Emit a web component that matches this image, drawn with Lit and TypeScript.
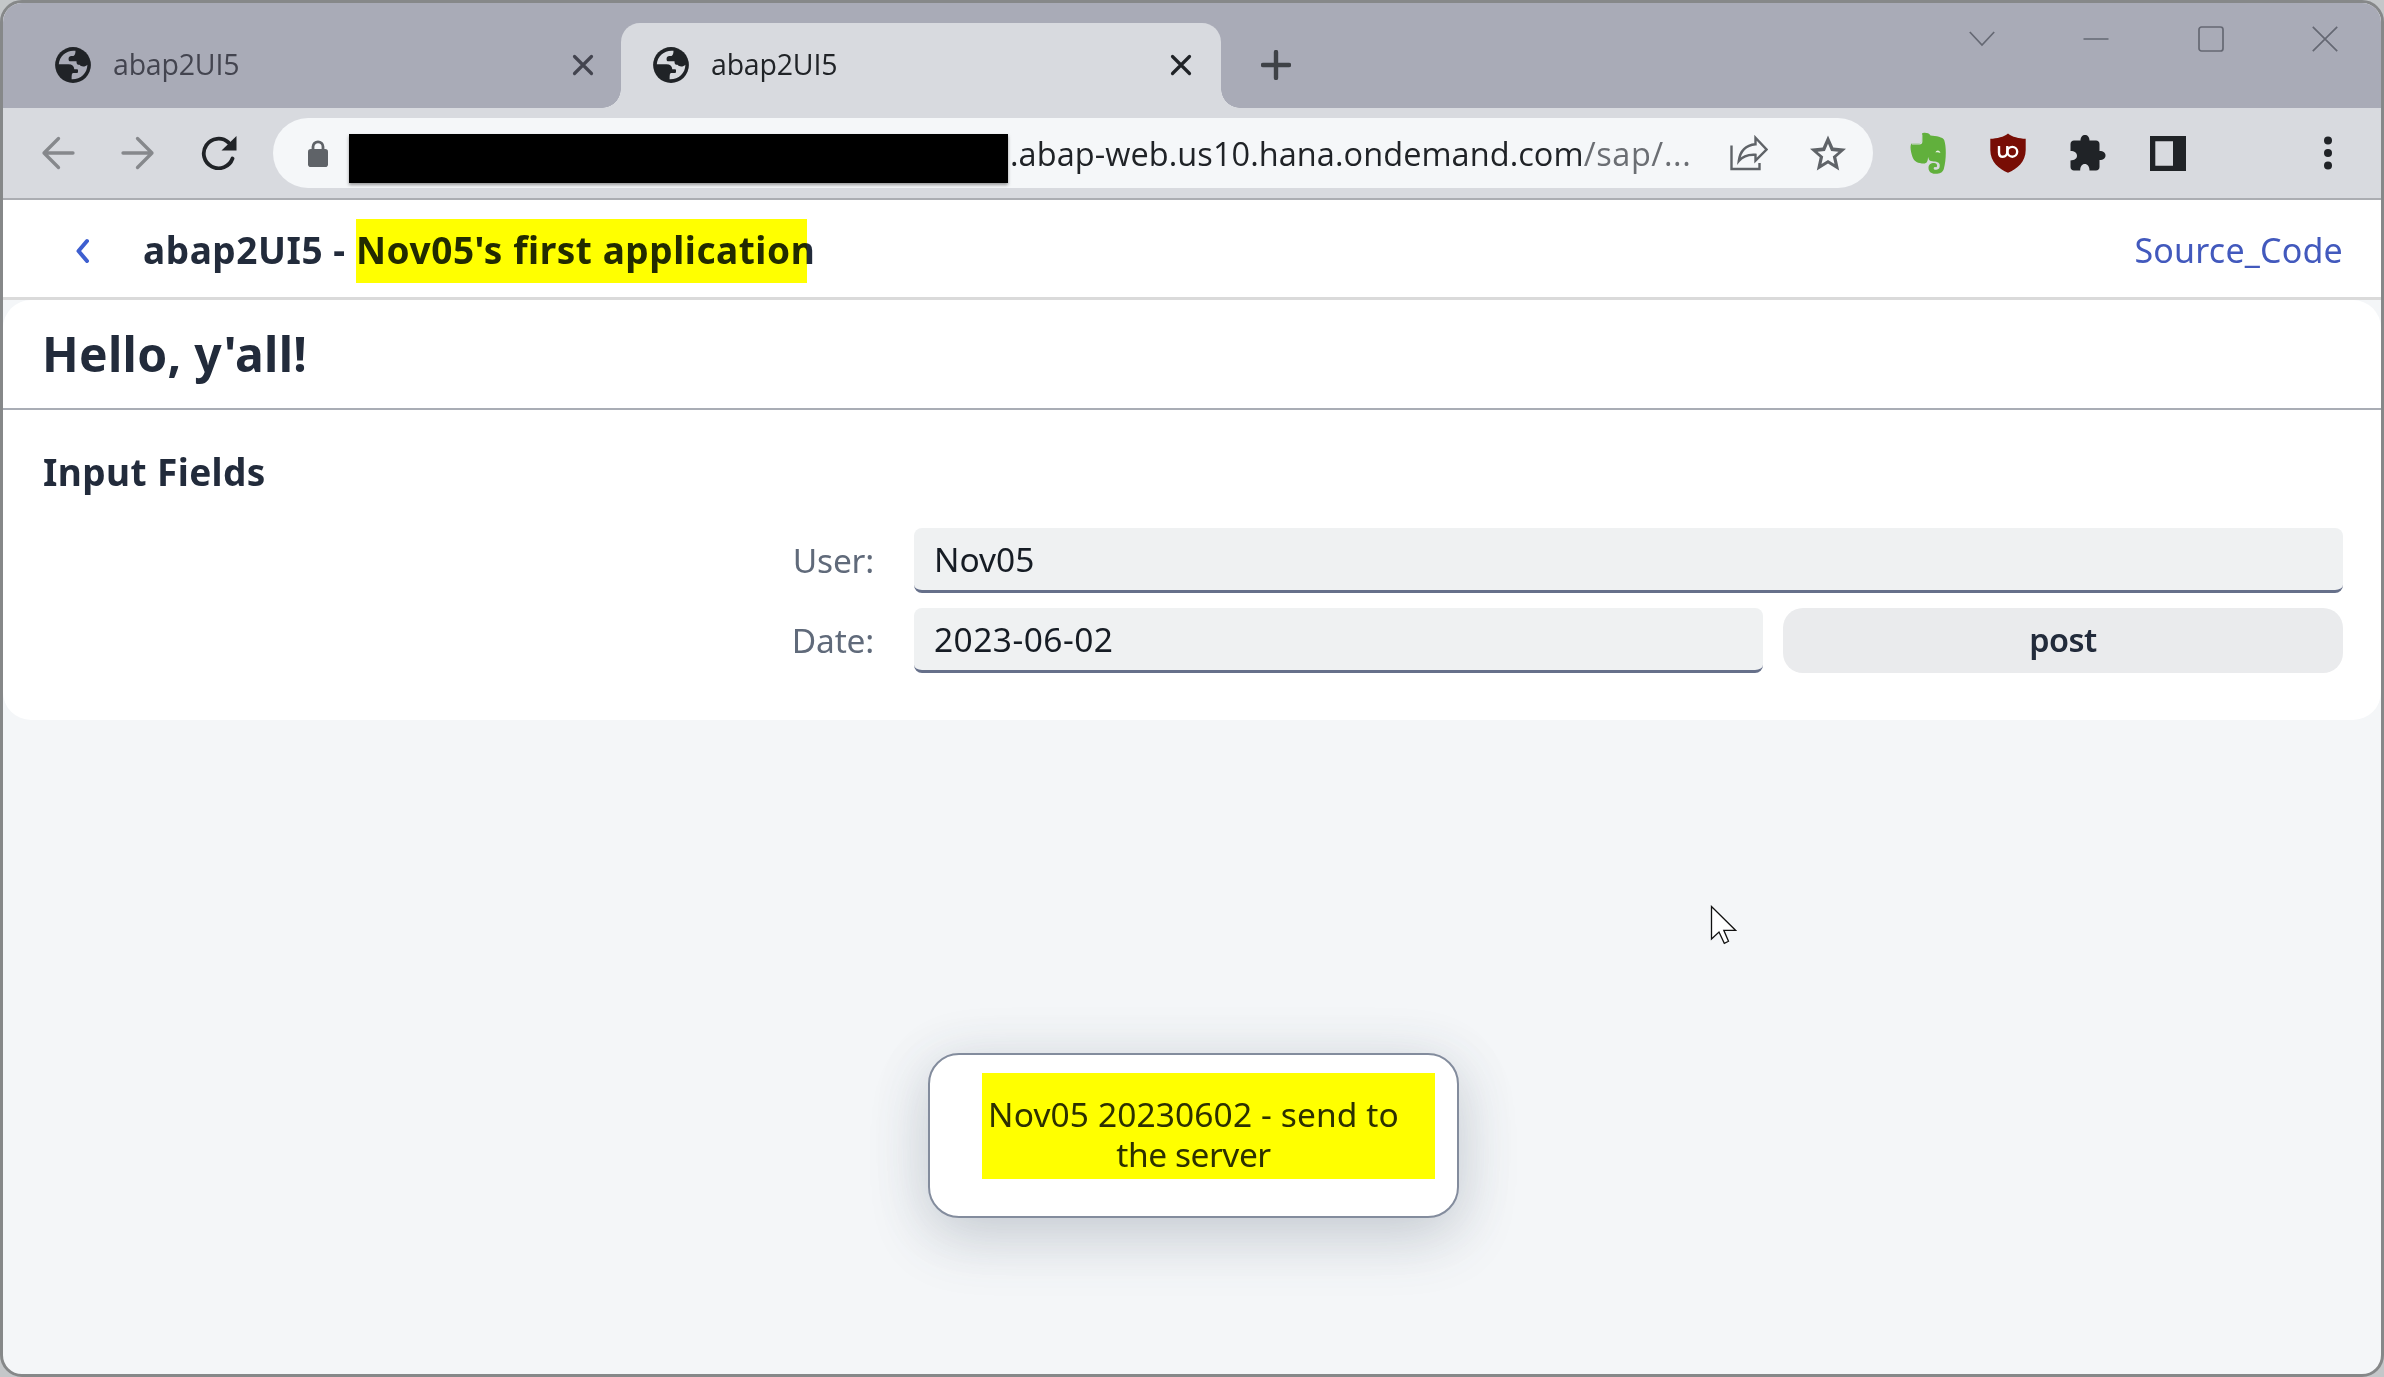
import { LitElement, html, css, svg } from "lit";
import { customElement, property } from "lit/decorators.js";

const icons: Record<string, { w: number; h: number; body: unknown }> = {
  globe: {
    w: 36, h: 36,
    body: svg`<circle cx="18" cy="18" r="17.900" fill="#202327"/>
      <path d="M20.500 3.800C12 2.800 4.500 8.500 3.800 17.300H13.500C17 17.300 19 19 19.300 22.300H22.300C23.300 22.300 23.300 26 22.300 26H18C16.800 26 16.600 28 16.600 32.200C25.500 32.500 32.200 26.500 32.400 17.700C30.500 20 26 20 24.500 17.800C22.500 17.800 21.500 17.500 21.500 14.300H14.800C13.600 14.300 13.300 12 13.800 10.500C14.500 8.800 16 8.900 18.500 8.900C19.800 8.500 20.500 7 20.500 3.800Z" class="land"/>`,
  },
  close: { w: 24, h: 24, body: svg`<path d="M3.500 3.500L20.500 20.500M20.500 3.500L3.500 20.500" fill="none" stroke="currentColor" stroke-width="3.200" stroke-linecap="round"/>` },
  plus: { w: 30, h: 30, body: svg`<path d="M15 2V28M2 15H28" fill="none" stroke="#3f4247" stroke-width="4.400" stroke-linecap="round"/>` },
  back: { w: 34, h: 34, body: svg`<path d="M32 17H3M17.500 2.500L3 17L17.500 31.500" fill="none" stroke="#86888c" stroke-width="3.300" stroke-linecap="round" stroke-linejoin="round"/>` },
  forward: { w: 34, h: 34, body: svg`<path d="M2 17H31M16.500 2.500L31 17L16.500 31.500" fill="none" stroke="#86888c" stroke-width="3.300" stroke-linecap="round" stroke-linejoin="round"/>` },
  reload: { w: 36, h: 34, body: svg`<path d="M31.500 22.500A14.800 14.800 0 1 1 27.500 6.500L31 10.500" fill="none" stroke="#202327" stroke-width="3.800" stroke-linecap="round"/><path d="M35.500 0V14.500H20.500Z" fill="#202327"/>` },
  lock: { w: 20, h: 27, body: svg`<path d="M5 11V6.800A5 5 0 0 1 15 6.800V11" fill="none" stroke="#5f6368" stroke-width="2.800"/><rect x="0" y="9" width="20" height="18" rx="2.800" fill="#5f6368"/>` },
  share: { w: 38, h: 36, body: svg`<path d="M1.500 10.500V34H29.500V28" fill="none" stroke="#5f6368" stroke-width="2.400"/><path d="M25.500 2.800L36.500 14.500L25.500 25.500V19.800C18 19.300 12.500 21.500 8.800 26C10 17 15 10.300 25.500 9.300Z" fill="none" stroke="#5f6368" stroke-width="2.400"/>` },
  star: { w: 36, h: 36, body: svg`<path fill-rule="evenodd" fill="#5f6368" d="M18 .5L23.300 12.600L36 13.700L26.300 22.300L29.200 35.500L18 28.500L6.800 35.500L9.700 22.300L0 13.700L12.700 12.600ZM18 8.800L14.900 16L7.500 16.700L13.200 21.600L11.500 29L18 25.100L24.500 29L22.800 21.600L28.500 16.700L21.100 16Z"/>` },
  elephant: {
    w: 36, h: 42,
    body: svg`<path fill="#61b03c" d="M12 1.500C13 .5 19 .3 20.500 3.500C26 4 33 5 34.200 8C36.500 15 36.300 28 33.800 37C32.500 41 29 42 25 41.800C21 41.600 18.500 39.500 18.500 36C18.500 32.500 20.500 31 24 31C27.500 31 28 35 25.800 35.200C23.500 34.500 22.500 37.800 26 37.800C30 38 30 34 29.500 32C28.500 29.500 25 29.800 21 29C18.500 28.500 18.500 25.500 18 25C18 29.500 16.500 31.500 14 31.500C8 31.500 4 29.500 2.500 25C1 20.500 -.2 15 1 12.500C1.500 11.200 2.500 11 4 11H9.500C10.800 11 11.500 10.500 11.500 9Z"/>
      <path d="M11.800 2.500V9.500C11.800 11 11 11.800 9.500 11.800H2" fill="none" stroke="#d9dbe1" stroke-width="1.200"/>
      <path d="M25.500 20.600C26 17.600 30 17.800 30.400 21C29 20.300 27 20.200 25.500 20.600Z" fill="#e8efe6"/>`,
  },
  shield: {
    w: 36, h: 40,
    body: svg`<path d="M18 .5C22 4 29 5.500 35.700 5.800V17C35.700 29 27 36 18 39.700C9 36 .3 29 .3 17V5.800C7 5.500 14 4 18 .5Z" fill="#780d05"/>
      <path d="M9 13V19.500C9 22 10.500 23.800 12.800 23.800C15.500 23.800 17.300 21.500 17.300 18.800V13" fill="none" stroke="#fff" stroke-width="2.400"/>
      <circle cx="22.300" cy="18.800" r="4.900" fill="none" stroke="#fff" stroke-width="2.400"/>`,
  },
  puzzle: { w: 36, h: 36, body: svg`<path fill="#202327" d="M10.500 5.500C10.500 2 12.500 0 15 0C17.500 0 19.500 2 19.500 5.500H26C28 5.500 29.500 7 29.500 9V16C33.500 16 35.500 18 35.500 20.500C35.500 23 33.500 25 29.500 25V32C29.500 34 28 35.500 26 35.500H19.500C19.500 31.500 17.500 29 14.800 29C12 29 10.200 31.500 10.200 35.500H4C2 35.500 .5 34 .5 32V25.500C4.500 25.500 7 23.500 7 20.800C7 18 4.500 16 .5 16V9C.5 7 2 5.500 4 5.500Z"/>` },
  panel: { w: 36, h: 35, body: svg`<path fill="#202327" fill-rule="evenodd" d="M0 0H36V35H0ZM5.300 5.300V29.700H23V5.300Z"/>` },
  dots: { w: 8, h: 34, body: svg`<g fill="#202327"><circle cx="4" cy="4.500" r="4"/><circle cx="4" cy="17" r="4"/><circle cx="4" cy="29.500" r="4"/></g>` },
  winDown: { w: 26, h: 26, body: svg`<path d="M.8 6L13 19L25.200 6" fill="none" stroke="#656873" stroke-width="1.700"/>` },
  winMin: { w: 26, h: 26, body: svg`<path d="M.5 13H25.500" stroke="#656873" stroke-width="1.700"/>` },
  winMax: { w: 26, h: 26, body: svg`<rect x="1" y="1" width="24" height="24" rx="2.500" fill="none" stroke="#656873" stroke-width="1.700"/>` },
  winClose: { w: 26, h: 26, body: svg`<path d="M.8 .8L25.200 25.200M25.200 .8L.8 25.200" stroke="#656873" stroke-width="1.700"/>` },
  navBack: { w: 16, h: 26, body: svg`<path d="M13 4L4.500 14L13 24" fill="none" stroke="#3e5fd0" stroke-width="4" stroke-linecap="round" stroke-linejoin="round"/>` },
  cursor: { w: 27, h: 40, body: svg`<path d="M1.500 1.500V34L9 27L14.300 38.300L18.500 36.300L13.800 25.300H25.500Z" fill="#fff" stroke="#111" stroke-width="1.300"/>` },
};

@customElement("ui-icon")
export class UiIcon extends LitElement {
  @property() name = "";
  static styles = css`
    :host { display: block; flex: none; line-height: 0; }
    .land { fill: var(--icon-bg, #d8dadf); }
  `;
  render() {
    const i = icons[this.name];
    return html`<svg width=${i.w} height=${i.h} viewBox="0 0 ${i.w} ${i.h}">${i.body}</svg>`;
  }
}

@customElement("browser-chrome")
export class BrowserChrome extends LitElement {
  static styles = css`
    :host { display: block; font-family: "Open Sans", "Noto Sans", sans-serif; }
    .strip { height: 105px; background: #a9abb7; display: flex; align-items: flex-end; box-sizing: border-box; }
    .tab { height: 85px; box-sizing: border-box; display: flex; align-items: center; padding: 0 26px 2px 52px; width: 618px; color: #43444f; --icon-bg: #a9abb7; }
    .tab.active { width: 600px; padding: 0 28px 2px 32px; background: #d8dadf; color: #202327; border-radius: 19px 19px 0 0; position: relative; --icon-bg: #d8dadf; }
    .tab.active::before, .tab.active::after { content: ""; position: absolute; bottom: 0; width: 19px; height: 19px; }
    .tab.active::before { right: 100%; background: radial-gradient(circle at 0 0, transparent 18.500px, #d8dadf 19px); }
    .tab.active::after { left: 100%; background: radial-gradient(circle at 100% 0, transparent 18.500px, #d8dadf 19px); }
    .name { flex: 1; margin: 0 0 2px 22px; font-size: 28.500px; line-height: 40px; letter-spacing: -.2px; }
    .add { margin: 0 0 28px 40px; }
    .win { margin: 0 43px 56px auto; display: flex; gap: 88.500px; }
    .bar { height: 92px; box-sizing: border-box; border-bottom: 2px solid #abadb2; background: #d8dadf; display: flex; align-items: center; padding: 0 49px 0 38px; }
    .nav { display: flex; align-items: center; gap: 46px; width: 232px; }
    .pill { width: 1600px; height: 70px; border-radius: 35px; background: #f5f7f9; display: flex; align-items: center; box-sizing: border-box; padding: 0 27px 0 35px; }
    .hidden { width: 659px; height: 49px; margin: 11px 0 0 21px; background: #000; box-shadow: 0 2px 3px rgba(60, 60, 60, .5); }
    .url { font-size: 32.500px; line-height: 44px; color: #202327; white-space: nowrap; flex: 1; margin: 2px 0 0 2px; letter-spacing: .06px; }
    .path { color: #6b6e73; letter-spacing: .6px; }
    .acts { display: flex; align-items: center; gap: 42px; }
    .ext { display: flex; align-items: center; gap: 44px; margin-left: 37px; }
    .more { margin-left: auto; }
  `;
  render() {
    return html`
      <div class="strip">
        <div class="tab"><ui-icon name="globe"></ui-icon><span class="name">abap2UI5</span><ui-icon name="close"></ui-icon></div>
        <div class="tab active"><ui-icon name="globe"></ui-icon><span class="name">abap2UI5</span><ui-icon name="close"></ui-icon></div>
        <ui-icon class="add" name="plus"></ui-icon>
        <div class="win">
          <ui-icon name="winDown"></ui-icon><ui-icon name="winMin"></ui-icon><ui-icon name="winMax"></ui-icon><ui-icon name="winClose"></ui-icon>
        </div>
      </div>
      <div class="bar">
        <div class="nav"><ui-icon name="back"></ui-icon><ui-icon name="forward"></ui-icon><ui-icon name="reload"></ui-icon></div>
        <div class="pill">
          <ui-icon name="lock"></ui-icon>
          <div class="hidden"></div>
          <span class="url">.abap-web.us10.hana.ondemand.com<span class="path">/sap/...</span></span>
          <div class="acts"><ui-icon name="share"></ui-icon><ui-icon name="star"></ui-icon></div>
        </div>
        <div class="ext">
          <ui-icon name="elephant"></ui-icon><ui-icon name="shield"></ui-icon><ui-icon name="puzzle"></ui-icon><ui-icon name="panel"></ui-icon>
        </div>
        <ui-icon class="more" name="dots"></ui-icon>
      </div>
    `;
  }
}

@customElement("app-root")
export class AppRoot extends LitElement {
  static styles = css`
    :host { display: block; height: 1377px; background: #c4c7c9; font-family: "Noto Sans", "Open Sans", sans-serif; }
    .window { height: 1377px; box-sizing: border-box; border: 3px solid #868889; border-radius: 22px; overflow: hidden; background: #f4f6f8; position: relative; display: flex; flex-direction: column; }
    .header { height: 100px; flex: none; box-sizing: border-box; background: #fff; border-bottom: 3px solid #dadada; display: flex; align-items: center; padding: 2px 38px 0 71px; }
    .title { font-size: 37px; line-height: 50px; font-weight: 700; color: #222b3b; margin: 0 auto 0 53px; white-space: pre; letter-spacing: .55px; }
    .marked { position: relative; display: inline-block; }
    .marked::after { content: ""; position: absolute; left: 0; right: 8px; top: -6px; height: 64px; background: #ff0; mix-blend-mode: multiply; }
    .link { font-size: 34px; line-height: 46px; color: #4259bd; letter-spacing: .2px; }
    .panel { height: 420px; flex: none; background: #fff; border-radius: 28px; }
    .head { height: 110px; box-sizing: border-box; border-bottom: 2px solid #a9adb5; padding: 19px 39px 0; font-size: 48px; line-height: 70px; font-weight: 700; color: #222b3b; letter-spacing: .3px; }
    .body { padding: 36px 38px 0 40px; }
    .sub { font-size: 37px; line-height: 52px; font-weight: 700; color: #222b3b; letter-spacing: .4px; }
    .form { display: grid; grid-template-columns: 851px 849px 560px; column-gap: 20px; row-gap: 15px; margin-top: 30px; font-size: 33.500px; line-height: 65px; }
    .label { color: #606a7a; text-align: right; padding-right: 20px; height: 65px; line-height: 64px; letter-spacing: -.2px; }
    .input { height: 65px; box-sizing: border-box; background: #eff1f2; border-radius: 8px; border-bottom: 3px solid #66708a; padding-left: 20px; color: #161c24; line-height: 63px; }
    .date { letter-spacing: .45px; }
    .wide { grid-column: span 2; }
    .btn { height: 65px; border-radius: 20px; background: #eaebed; text-align: center; color: #222b3b; font-weight: 600; font-size: 32.500px; line-height: 64px; letter-spacing: -.5px; }
    .toast { position: absolute; left: 925px; top: 1050px; width: 531px; height: 165px; box-sizing: border-box; border: 2px solid #838c9d; border-radius: 31px; background: #fff; box-shadow: 0 20px 60px rgba(70, 85, 105, .2), 0 6px 60px rgba(70, 85, 105, .1); padding: 39px 30px 0; font-size: 33.500px; line-height: 40px; text-align: center; color: #2c3040; }
    .line { letter-spacing: .12px; }
    .line.last { letter-spacing: -.45px; }
    .toast::after { content: ""; position: absolute; left: 52px; top: 18px; width: 453px; height: 106px; background: #ff0; mix-blend-mode: multiply; }
    .cursor { position: absolute; left: 1707px; top: 902px; }
  `;
  render() {
    return html`
      <div class="window">
        <browser-chrome></browser-chrome>
        <div class="header">
          <ui-icon name="navBack"></ui-icon>
          <div class="title">abap2UI5 - <span class="marked">Nov05's first application</span></div>
          <span class="link">Source_Code</span>
        </div>
        <div class="panel">
          <div class="head">Hello, y'all!</div>
          <div class="body">
            <div class="sub">Input Fields</div>
            <div class="form">
              <div class="label">User:</div>
              <div class="input wide">Nov05</div>
              <div class="label">Date:</div>
              <div class="input date">2023-06-02</div>
              <div class="btn">post</div>
            </div>
          </div>
        </div>
        <div class="toast"><div class="line">Nov05 20230602 - send to</div><div class="line last">the server</div></div>
        <ui-icon class="cursor" name="cursor"></ui-icon>
      </div>
    `;
  }
}
